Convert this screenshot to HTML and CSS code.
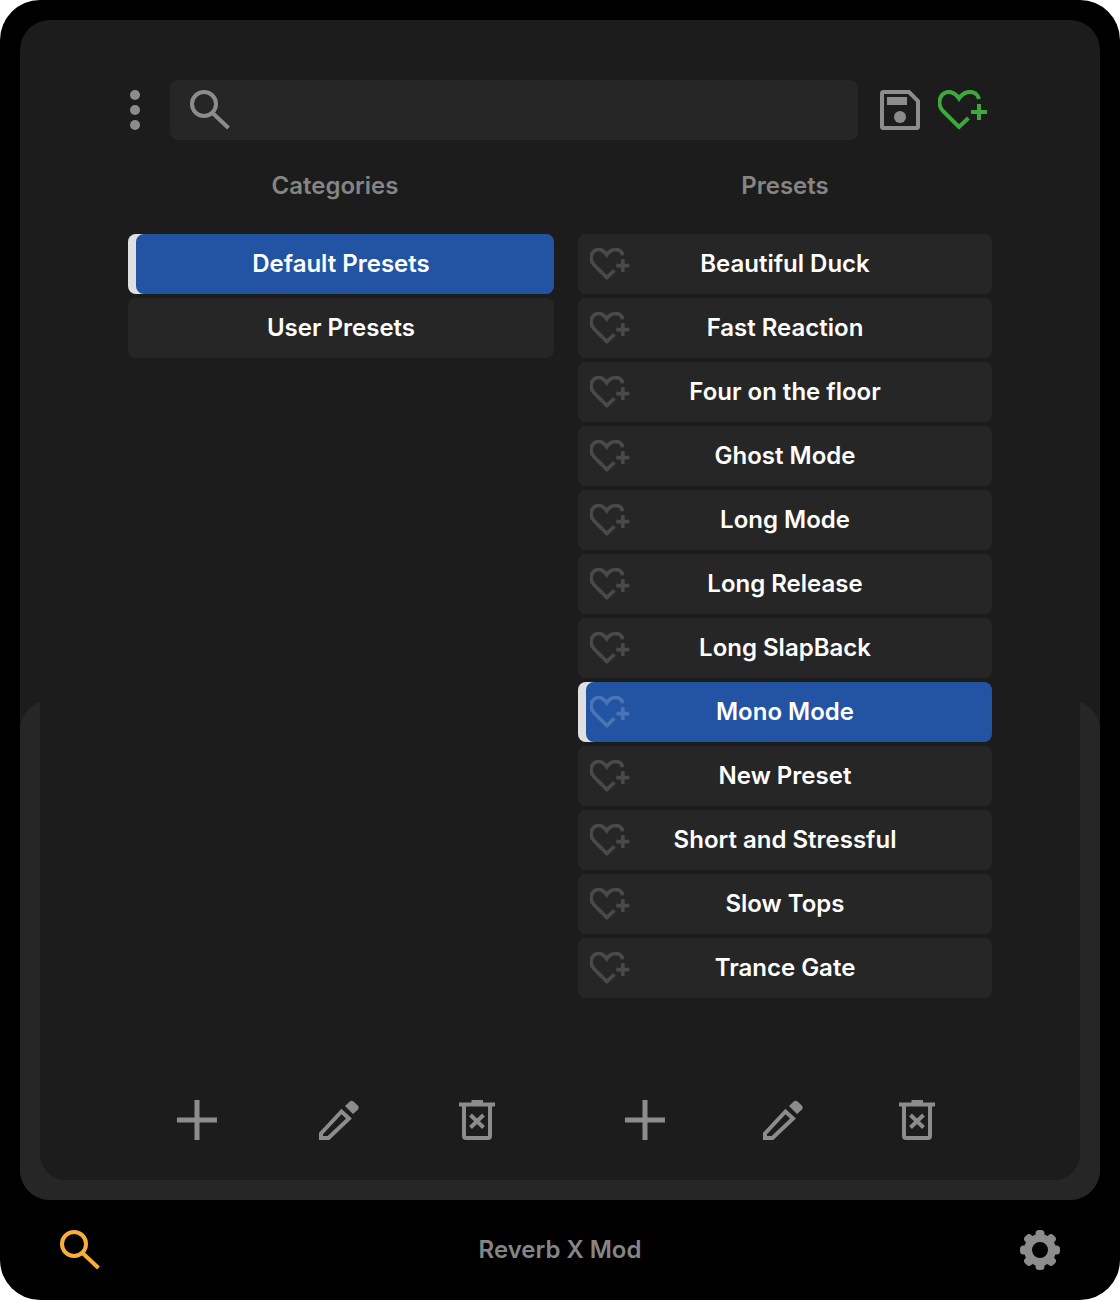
FILE: index.html
```html
<!DOCTYPE html>
<html lang="en">
<head>
<meta charset="utf-8">
<title>Reverb X Mod</title>
<link rel="stylesheet" href="styles.css">
</head>
<body>
<svg class="defs" width="0" height="0" aria-hidden="true">
  <defs>
    <g id="heart-plus">
      <path class="heart-line" d="M30.500 28 21 37 5.500 21.500C0 16 0.500 8.500 4.500 4.500 9.500 0 16.500 1.500 21 8.500 25.500 1.500 33 0.500 37.500 3.500 39.500 5 40.500 7 41 9"/>
      <path class="heart-line" d="M33 22H49M41 14V30"/>
    </g>
    <g id="magnifier">
      <circle class="mag-line" cx="14" cy="14" r="12"/>
      <path class="mag-line" d="M22.500 23 38.500 38"/>
    </g>
    <g id="plus"><path class="tool-line" d="M0 20H40M20 0V40"/></g>
    <g id="pencil">
      <path class="tool-thin" d="M2 33.500 22.500 11.500 30 18.500 9.500 38H2Z"/>
      <path class="tool-fill" d="M26 6 31 1.200Q32.500 0 34.500 1.500L38.800 5.500Q40.500 8 39 9.500L34 14Z"/>
    </g>
    <g id="trash">
      <path class="tool-thin" d="M0 4.500H36"/>
      <path class="tool-fill" d="M12.500 0H24V3H12.500Z"/>
      <path class="tool-thin" d="M5 5V36Q5 38 7 38H29Q31 38 31 36V5"/>
      <path class="tool-thin" d="M11.500 15 24.500 27.500M24.500 15 11.500 27.500"/>
    </g>
  </defs>
</svg>

<div class="shell">
  <main class="panel">
    <header class="topbar">
      <div class="dots"><span></span><span></span><span></span></div>
      <div class="search">
        <svg class="search-icon" viewBox="0 0 40 40"><use href="#magnifier"/></svg>
      </div>
      <svg class="save-icon" viewBox="0 0 40 40">
        <path class="tool-thin" d="M3.500 2H29L38 11V36.500Q38 38 36.500 38H3.500Q2 38 2 36.500V3.500Q2 2 3.500 2Z"/>
        <rect class="tool-fill" x="7" y="7" width="20" height="8"/>
        <circle class="tool-fill" cx="20" cy="27" r="6"/>
      </svg>
      <svg class="fav-icon" viewBox="0 0 50 40"><use href="#heart-plus"/></svg>
    </header>

    <div class="columns">
      <section class="column">
        <h2 class="title title-left">Categories</h2>
        <ul class="list">
          <li class="row selected"><span class="label">Default Presets</span></li>
          <li class="row"><span class="label">User Presets</span></li>
        </ul>
        <div class="tools tools-left">
          <svg class="tool" viewBox="0 0 40 40"><use href="#plus"/></svg>
          <svg class="tool" viewBox="0 0 40 40"><use href="#pencil"/></svg>
          <svg class="tool tool-trash" viewBox="0 0 36 40"><use href="#trash"/></svg>
        </div>
      </section>

      <section class="column">
        <h2 class="title">Presets</h2>
        <ul class="list">
          <li class="row"><svg class="row-heart" viewBox="0 0 50 40"><use href="#heart-plus"/></svg><span class="label">Beautiful Duck</span></li>
          <li class="row"><svg class="row-heart" viewBox="0 0 50 40"><use href="#heart-plus"/></svg><span class="label">Fast Reaction</span></li>
          <li class="row"><svg class="row-heart" viewBox="0 0 50 40"><use href="#heart-plus"/></svg><span class="label">Four on the floor</span></li>
          <li class="row"><svg class="row-heart" viewBox="0 0 50 40"><use href="#heart-plus"/></svg><span class="label">Ghost Mode</span></li>
          <li class="row"><svg class="row-heart" viewBox="0 0 50 40"><use href="#heart-plus"/></svg><span class="label">Long Mode</span></li>
          <li class="row"><svg class="row-heart" viewBox="0 0 50 40"><use href="#heart-plus"/></svg><span class="label">Long Release</span></li>
          <li class="row"><svg class="row-heart" viewBox="0 0 50 40"><use href="#heart-plus"/></svg><span class="label">Long SlapBack</span></li>
          <li class="row selected"><svg class="row-heart" viewBox="0 0 50 40"><use href="#heart-plus"/></svg><span class="label">Mono Mode</span></li>
          <li class="row"><svg class="row-heart" viewBox="0 0 50 40"><use href="#heart-plus"/></svg><span class="label">New Preset</span></li>
          <li class="row"><svg class="row-heart" viewBox="0 0 50 40"><use href="#heart-plus"/></svg><span class="label">Short and Stressful</span></li>
          <li class="row"><svg class="row-heart" viewBox="0 0 50 40"><use href="#heart-plus"/></svg><span class="label">Slow Tops</span></li>
          <li class="row"><svg class="row-heart" viewBox="0 0 50 40"><use href="#heart-plus"/></svg><span class="label">Trance Gate</span></li>
        </ul>
        <div class="tools tools-right">
          <svg class="tool" viewBox="0 0 40 40"><use href="#plus"/></svg>
          <svg class="tool" viewBox="0 0 40 40"><use href="#pencil"/></svg>
          <svg class="tool tool-trash" viewBox="0 0 36 40"><use href="#trash"/></svg>
        </div>
      </section>
    </div>
  </main>

  <footer class="footer">
    <svg class="footer-search" viewBox="0 0 40 40"><use href="#magnifier"/></svg>
    <span class="plugin-name">Reverb X Mod</span>
    <svg class="gear" viewBox="-20 -20 40 40">
      <circle class="gear-ring" r="12"/>
      <rect class="gear-tooth" x="-4.500" y="-20" width="9" height="9" rx="3.500"/>
      <rect class="gear-tooth" x="-4.500" y="-20" width="9" height="9" rx="3.500" transform="rotate(45)"/>
      <rect class="gear-tooth" x="-4.500" y="-20" width="9" height="9" rx="3.500" transform="rotate(90)"/>
      <rect class="gear-tooth" x="-4.500" y="-20" width="9" height="9" rx="3.500" transform="rotate(135)"/>
      <rect class="gear-tooth" x="-4.500" y="-20" width="9" height="9" rx="3.500" transform="rotate(180)"/>
      <rect class="gear-tooth" x="-4.500" y="-20" width="9" height="9" rx="3.500" transform="rotate(225)"/>
      <rect class="gear-tooth" x="-4.500" y="-20" width="9" height="9" rx="3.500" transform="rotate(270)"/>
      <rect class="gear-tooth" x="-4.500" y="-20" width="9" height="9" rx="3.500" transform="rotate(315)"/>
    </svg>
  </footer>
</div>
</body>
</html>
```

FILE: styles.css
```css
* { box-sizing: border-box; }

html, body {
  margin: 0;
  background: #fff;
}

body {
  font-family: "Inter", "Liberation Sans", sans-serif;
}

.defs { position: absolute; }

.shell {
  width: 1120px;
  height: 1300px;
  background: #000;
  border-radius: 40px;
  padding: 20px 20px 0;
  display: flex;
  flex-direction: column;
}

.panel {
  position: relative;
  height: 1180px;
  background: #1c1c1c;
  border-radius: 30px;
  padding: 60px 108px 60px;
  display: flex;
  flex-direction: column;
}

.panel::before {
  content: "";
  position: absolute;
  left: 0;
  right: 0;
  bottom: 0;
  height: 500px;
  background: #262626;
  border-radius: 30px;
}

.panel::after {
  content: "";
  position: absolute;
  left: 20px;
  right: 20px;
  bottom: 20px;
  height: 520px;
  background: #1c1c1c;
  border-radius: 0 0 26px 26px;
}

.topbar, .columns {
  position: relative;
  z-index: 1;
}

.topbar {
  display: flex;
  align-items: center;
  height: 60px;
}

.dots {
  width: 14px;
  display: flex;
  flex-direction: column;
  align-items: center;
  gap: 5px;
}

.dots span {
  width: 10px;
  height: 10px;
  border-radius: 50%;
  background: #8c8c8c;
}

.search {
  width: 688px;
  height: 60px;
  margin-left: 28px;
  background: #262626;
  border-radius: 8px;
  padding: 10px 20px;
  display: flex;
}

.search-icon { width: 40px; height: 40px; color: #8c8c8c; }
.save-icon { width: 40px; height: 40px; margin-left: 22px; }
.fav-icon { width: 50px; height: 40px; margin-left: 18px; color: #3fa83a; stroke-width: 4; }

.columns {
  flex: 1;
  display: grid;
  grid-template-columns: 426px 414px;
  column-gap: 24px;
}

.column {
  display: flex;
  flex-direction: column;
}

.title {
  margin: 26px 0 28px;
  height: 40px;
  line-height: 40px;
  text-align: center;
  font-size: 24px;
  font-weight: 600;
  color: #858585;
}

.title-left { padding-right: 12px; }

.list {
  flex: 1;
  margin: 0;
  padding: 0;
  list-style: none;
  display: flex;
  flex-direction: column;
  gap: 4px;
}

.row {
  height: 60px;
  padding: 0 12px;
  background: #262626;
  border-radius: 8px;
  display: grid;
  grid-template-columns: 40px 1fr 40px;
  align-items: center;
  color: #4a4a4a;
}

.row.selected {
  background: #2353a3;
  box-shadow: inset 8px 0 0 #e0e0e0;
  color: #4a74b4;
}

.label {
  grid-column: 2;
  padding-bottom: 2px;
  text-align: center;
  font-size: 24px;
  font-weight: 600;
  color: #fff;
}

.row-heart { grid-column: 1; grid-row: 1; width: 40px; height: 32px; stroke-width: 4.500; }

.tools { display: grid; height: 40px; }
.tools-left { padding-left: 49px; grid-template-columns: 142px 140px 36px; }
.tools-right { padding-left: 47px; grid-template-columns: 138px 136px 36px; }

.tool { width: 40px; height: 40px; }
.tool-trash { width: 36px; }

.tool-line { fill: none; stroke: #8c8c8c; stroke-width: 5; }
.tool-thin { fill: none; stroke: #8c8c8c; stroke-width: 4; }
.tool-fill { fill: #8c8c8c; }
.heart-line { fill: none; stroke: currentColor; }
.mag-line { fill: none; stroke: currentColor; stroke-width: 4; }

.footer {
  flex: 1;
  margin: 0 -20px;
  padding: 0 60px;
  display: flex;
  align-items: center;
  justify-content: space-between;
}

.footer-search { width: 40px; height: 40px; color: #f9ad3a; }
.plugin-name { padding-bottom: 2px; font-size: 24px; font-weight: 600; color: #858585; }
.gear { width: 40px; height: 40px; }
.gear-ring { fill: none; stroke: #8c8c8c; stroke-width: 8; }
.gear-tooth { fill: #8c8c8c; }
```
